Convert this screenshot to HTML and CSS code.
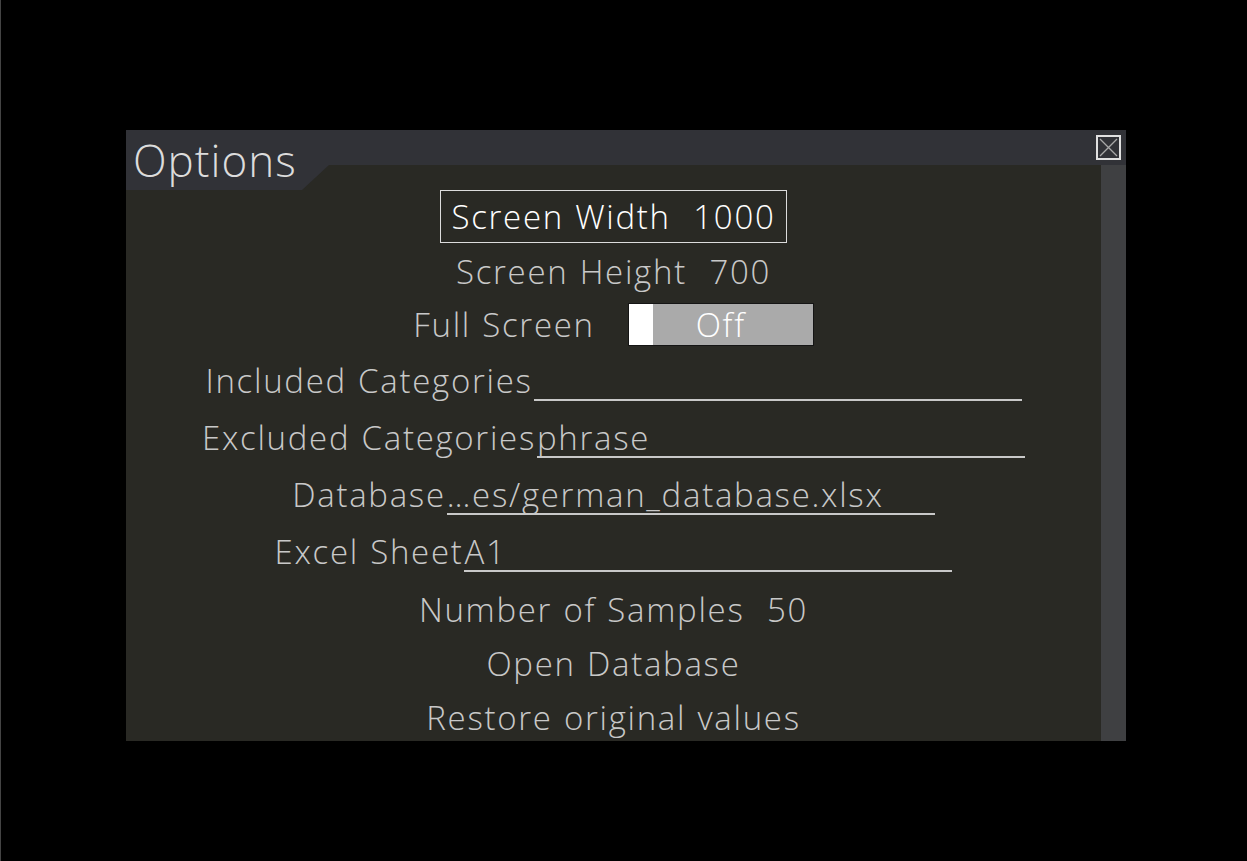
FILE: index.html
```html
<!DOCTYPE html>
<html>
<head>
<meta charset="utf-8">
<link rel="stylesheet" href="styles.css">
</head>
<body>
<div class="window">
  <div class="titlebar">
    <div class="tab">Options</div>
    <div class="close">
      <svg width="25" height="25" viewBox="0 0 25 25"><rect x="1" y="1" width="23" height="23" fill="none" stroke="#e0e0e0" stroke-width="2"/><path d="M4 4 L21 21 M21 4 L4 21" stroke="#a8a8a8" stroke-width="1.3"/></svg>
    </div>
  </div>
  <div class="main">
    <div class="content">
      <div class="row box-row"><span class="box">Screen Width  1000</span></div>
      <div class="row text-row r2">Screen Height  700</div>
      <div class="row toggle-row">
        <span class="label">Full Screen</span>
        <span class="toggle"><span class="knob"></span><span class="toggle-text">Off</span></span>
      </div>
      <div class="row field-row">
        <span class="label">Included Categories</span><span class="field"></span>
      </div>
      <div class="row field-row">
        <span class="label">Excluded Categories</span><span class="field">phrase</span>
      </div>
      <div class="row field-row">
        <span class="label">Database</span><span class="field">…es/german_database.xlsx</span>
      </div>
      <div class="row field-row">
        <span class="label">Excel Sheet</span><span class="field">A1</span>
      </div>
      <div class="row text-row r8">Number of Samples  50</div>
      <div class="row text-row">Open Database</div>
      <div class="row text-row">Restore original values</div>
    </div>
    <div class="scrollbar"></div>
  </div>
</div>
</body>
</html>
```
FILE: styles.css
```css
html, body {
  margin: 0;
  padding: 0;
}
body {
  background: #000;
  width: 1247px;
  height: 861px;
  overflow: hidden;
  border-left: 1px solid #444;
  box-sizing: border-box;
  font-family: "Open Sans", "Liberation Sans", sans-serif;
  font-weight: 300;
}
.window {
  margin: 130px 0 0 125px;
  width: 1000px;
  height: 611px;
  background: #292924;
  display: flex;
  flex-direction: column;
  overflow: hidden;
}
.titlebar {
  position: relative;
  height: 35px;
  flex: none;
  background: #313237;
  display: flex;
  justify-content: flex-end;
  align-items: flex-start;
}
.tab {
  position: absolute;
  left: 0;
  top: 0;
  width: 203px;
  height: 60px;
  background: #313237;
  clip-path: polygon(0 0, 100% 0, 100% 35px, 176px 60px, 0 60px);
  color: #dcdcdc;
  font-size: 44px;
  letter-spacing: 1px;
  line-height: 60px;
  padding-left: 7px;
  box-sizing: border-box;
  z-index: 1;
}
.close {
  width: 25px;
  height: 25px;
  margin: 5px 5px 0 0;
}
.close svg { display: block; }
.main {
  flex: 1;
  display: flex;
  min-height: 0;
}
.content {
  flex: 1;
  padding-top: 25px;
  display: flex;
  flex-direction: column;
  align-items: center;
  overflow: hidden;
  color: #c8c8c8;
  font-size: 33px;
  letter-spacing: 1.7px;
  word-spacing: 1px;
  white-space: pre;
}
.scrollbar {
  width: 25px;
  background: #3f4042;
  flex: none;
}
.row {
  display: flex;
  justify-content: center;
  flex: none;
}
.box-row { height: 53px; }
.box {
  height: 53px;
  box-sizing: border-box;
  border: 1px solid #dcdcdc;
  color: #fff;
  line-height: 51px;
  padding: 0 11px;
}
.text-row {
  height: 54px;
  line-height: 54px;
}
.r2 {
  margin-top: 2px;
  height: 53px;
  line-height: 54px;
}
.r8 { margin-top: 4px; }
.toggle-row {
  height: 53px;
  align-items: center;
  gap: 33px;
  line-height: 53px;
}
.toggle {
  width: 186px;
  height: 43px;
  box-sizing: border-box;
  border: 1px solid #151515;
  background: #aaaaaa;
  position: relative;
  display: flex;
  align-items: center;
  justify-content: center;
}
.knob {
  position: absolute;
  left: 0;
  top: 0;
  width: 24px;
  height: 100%;
  background: #fff;
}
.toggle-text {
  color: #fff;
  line-height: 41px;
}
.field-row {
  height: 57px;
  box-sizing: border-box;
  padding-top: 12px;
  align-items: flex-start;
}
.field-row .label,
.field {
  line-height: 36px;
  height: 38px;
}
.field {
  width: 488px;
  box-sizing: border-box;
  border-bottom: 2px solid #c8c8c8;
  margin-left: 1px;
}
```
